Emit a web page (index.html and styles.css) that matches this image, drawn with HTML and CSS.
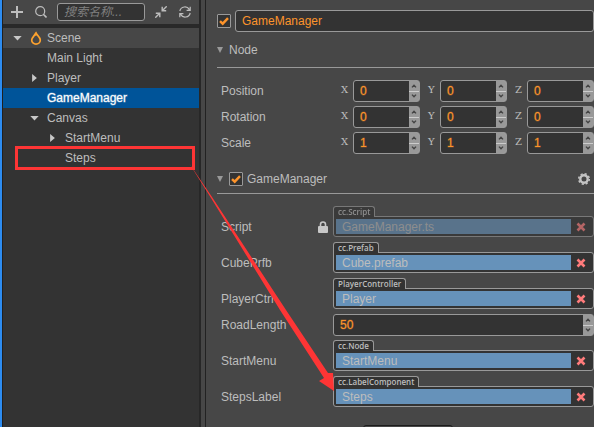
FILE: index.html
```html
<!DOCTYPE html>
<html lang="en">
<head>
<meta charset="utf-8">
<title>Scene editor</title>
<link rel="stylesheet" href="styles.css">
</head>
<body>
<svg class="symbols" aria-hidden="true">
  <symbol id="tick" viewBox="0 0 12 12"><path d="M2 6.2 4.7 8.7 10 3.2" fill="none" stroke="#fd942b" stroke-width="2.4"/></symbol>
  <symbol id="cross" viewBox="0 0 10 10"><path d="M1.5 1.5l7 7M8.5 1.5l-7 7" fill="none" stroke="#ff7b7b" stroke-width="2.6"/></symbol>
  <symbol id="up" viewBox="0 0 6 4"><path d="M1 3.4 3 1.2 5 3.4" fill="none" stroke="#444" stroke-width="1.4"/></symbol>
  <symbol id="down" viewBox="0 0 6 4"><path d="M1 .6 3 2.8 5 .6" fill="none" stroke="#444" stroke-width="1.4"/></symbol>
  <symbol id="open" viewBox="0 0 10 6"><path d="M0 0h10L5 5.5z" fill="#c8c8c8"/></symbol>
  <symbol id="closed" viewBox="0 0 6 10"><path d="M0 0v10L6 5z" fill="#c8c8c8"/></symbol>
</svg>
<main class="app">
  <aside class="hierarchy">
    <div class="toolbar">
      <button class="tool" aria-label="Add node"><svg width="12" height="12" viewBox="0 0 12 12"><path d="M6 0v12M0 6h12" stroke="#bdbdbd" stroke-width="2"/></svg></button>
      <button class="tool" aria-label="Search"><svg width="12" height="12" viewBox="0 0 12 12" fill="none" stroke="#bdbdbd"><circle cx="5.2" cy="5.2" r="4.5" stroke-width="1.2"/><path d="M8.3 8.3 11.5 11.5" stroke-width="1.6"/></svg></button>
      <input class="search" type="text" placeholder="搜索名称..." aria-label="搜索名称">
      <button class="tool" aria-label="Collapse all"><svg width="12" height="12" viewBox="0 0 12 12" fill="none" stroke="#bdbdbd" stroke-width="1.4"><path d="M11.7.3 7.5 4.5M7.2.8v4h4M.3 11.7l4.2-4.2M.8 7.2h4v4"/></svg></button>
      <button class="tool" aria-label="Refresh"><svg width="12" height="12" viewBox="0 0 12 12" fill="none" stroke="#bdbdbd" stroke-width="1.2"><path d="M.8 5A5.2 5.2 0 0 1 10.4 3.6M11.2 7A5.2 5.2 0 0 1 1.6 8.4M11.2.7v3.6H7.6M.8 11.3V7.7h3.6"/></svg></button>
    </div>
    <ul class="tree">
      <li class="node root">
        <span class="arrow"><svg width="9" height="5"><use href="#open"/></svg></span>
        <svg class="flame" width="12" height="14" viewBox="0 0 12 14"><path d="M6 1.6C6.2 4 10.3 5.6 10.3 9A4.2 4 0 0 1 1.7 9C1.7 6.500 4.700 5 6 1.600z" fill="none" stroke="#fca22f" stroke-width="1.700"/><path d="M6 0 7.600 4 5 5z" fill="#fca22f"/></svg>
        <span>Scene</span>
      </li>
      <li class="node level-one"><span class="arrow"></span><span>Main Light</span></li>
      <li class="node level-one"><span class="arrow"><svg width="5" height="8"><use href="#closed"/></svg></span><span>Player</span></li>
      <li class="node level-one selected"><span class="arrow"></span><span>GameManager</span></li>
      <li class="node level-one"><span class="arrow"><svg width="9" height="5"><use href="#open"/></svg></span><span>Canvas</span></li>
      <li class="node level-two"><span class="arrow"><svg width="5" height="8"><use href="#closed"/></svg></span><span>StartMenu</span></li>
      <li class="node level-two"><span class="arrow"></span><span>Steps</span></li>
    </ul>
  </aside>

  <section class="inspector">
    <div class="name-row">
      <label class="check"><input type="checkbox" checked aria-label="Node enabled"><svg width="12" height="12"><use href="#tick"/></svg></label>
      <input class="name" type="text" value="GameManager" aria-label="Node name">
    </div>

    <h2 class="heading"><svg class="fold" width="6" height="6" viewBox="0 0 6 6"><path d="M0 0h6L3 6z" fill="#999"/></svg><span>Node</span></h2>
    <div class="rows vectors" id="vectors"></div>

    <h2 class="heading component">
      <svg class="fold" width="6" height="6" viewBox="0 0 6 6"><path d="M0 0h6L3 6z" fill="#999"/></svg>
      <label class="check"><input type="checkbox" checked aria-label="Component enabled"><svg width="12" height="12"><use href="#tick"/></svg></label>
      <span>GameManager</span>
      <button class="tool gear" aria-label="Component settings"><svg width="12" height="12" viewBox="0 0 12 12" fill="none" stroke="#c4c4c4"><circle cx="6" cy="6" r="3.700" stroke-width="2.400"/><circle cx="6" cy="6" r="5.300" stroke-width="1.500" stroke-dasharray="2.160 2"/></svg></button>
    </h2>
    <div class="rows" id="properties"></div>
    <button class="add" aria-label="Add component"></button>
  </section>

  <svg class="callout" width="345" height="400" viewBox="0 0 345 400" aria-hidden="true">
    <rect x="16.500" y="147.500" width="177" height="21" fill="none" stroke="#fd3535" stroke-width="3"/>
    <path d="M189 163 212 197 286 310 328 373 333 373 334 391 319 381 324 378 280 310 211 198z" fill="#fd3535"/>
  </svg>
</main>
<script src="app.js"></script>
</body>
</html>
```
FILE: styles.css
```css
* { box-sizing: border-box; }

body {
  margin: 0;
  background: #474747;
  color: #bdbdbd;
  font: 12px/20px "Liberation Sans", "Noto Sans CJK SC", sans-serif;
}

button, input { font: inherit; color: inherit; }
input { min-width: 0; border-radius: 3px; outline: 0; }
svg { display: block; flex: none; }
.symbols { position: absolute; width: 0; height: 0; }

.app {
  position: relative;
  display: flex;
  height: 100vh;
  overflow: hidden;
}

.hierarchy {
  display: flex;
  flex-direction: column;
  flex: none;
  width: 201px;
  border-left: 2px solid #2d8cf0;
  border-right: 2px solid #272727;
}

.toolbar {
  display: flex;
  align-items: center;
  gap: 12px;
  height: 24px;
  padding: 0 8px;
  border-left: 1px solid #202020;
}

.tool {
  display: block;
  flex: none;
  width: 12px;
  height: 12px;
  padding: 0;
  border: 0;
  background: none;
}

.search {
  flex: 1;
  width: 0;
  height: 18px;
  margin: 0 -2px 0 -2px;
  padding: 0 6px;
  border: 1px solid #999;
  background: #333;
  font-style: italic;
}
.search::placeholder { color: #808080; }

.tree {
  flex: 1;
  margin: 0;
  padding: 4px 0 0;
  border-left: 1px solid #202020;
  background: linear-gradient(#292929 4px, #333 4px);
  list-style: none;
}
.node { display: flex; align-items: center; height: 20px; }
.node .arrow { display: grid; place-items: center; width: 10px; margin-right: 8px; }
.root { padding-left: 9px; background: #474747; }
.flame { margin-right: 5px; }
.level-one { padding-left: 26px; }
.level-two { padding-left: 44px; }
.selected { background: #005499; color: #fff; -webkit-text-stroke: 1px #ffffff60; }

.inspector {
  flex: 1;
  min-width: 0;
  margin-left: 4px;
  padding: 10px 0 0 11px;
  border-left: 1px solid #222;
}

.name-row { display: flex; align-items: center; gap: 4px; }
.name {
  flex: 1;
  height: 22px;
  padding: 0 6px;
  border: 1px solid #999;
  background: #333;
  color: #fd942b;
}

.check {
  display: grid;
  flex: none;
  width: 14px;
  height: 14px;
  border: 1px solid #999;
  border-radius: 1px;
  background: #333;
}
.check input { grid-area: 1 / 1; width: 12px; height: 12px; margin: 0; appearance: none; }
.check svg { grid-area: 1 / 1; pointer-events: none; }

.heading {
  display: flex;
  align-items: center;
  height: 36px;
  margin: 0;
  border-bottom: 1px solid #999;
  font-size: 12px;
  font-weight: normal;
}
.fold { margin-right: 6px; }
.component { height: 29px; margin-top: 11px; }
.component .check { margin-right: 4px; }
.gear { margin: 0 4px 0 auto; }

.rows { display: grid; gap: 4px; padding: 12px 0 0 4px; }
.row { display: flex; align-items: flex-end; line-height: 22px; }
.caption { flex: none; width: 112px; }
.lock { width: 10px; margin: 0 5px 5px -15px; }

.axes { display: grid; grid-template-columns: repeat(3, 1fr); flex: 1; min-width: 0; }
.axis { display: flex; }
.axis label {
  flex: none;
  width: 20px;
  padding-left: 8px;
  font: 10px/20px "DejaVu Serif", serif;
}

.number {
  display: flex;
  flex: 1;
  min-width: 0;
  height: 22px;
  overflow: hidden;
  border: 1px solid #999;
  border-radius: 3px;
  background: #333;
}
.number input {
  flex: 1;
  width: 0;
  padding: 0 6px;
  border: 0;
  background: none;
  color: #fd942b;
  -webkit-text-stroke: 1px #fd942b50;
}
.spin { display: grid; grid-template-rows: 1fr 1fr; gap: 1px; width: 10px; background: #ccc; }
.spin button { display: grid; place-items: center; padding: 0; border: 0; background: #999; }

.reference { display: flex; flex-direction: column; align-items: flex-start; flex: 1; min-width: 0; padding-bottom: 1px; }
.type {
  z-index: 1;
  height: 11px;
  margin-bottom: -1px;
  padding: 0 4px;
  border: 1px solid #999;
  border-bottom: 0;
  border-radius: 3px 3px 0 0;
  background: #333;
  font: 8px/10px "Open Sans", sans-serif;
  font-weight: 600;
}
.asset {
  display: flex;
  align-items: center;
  width: 100%;
  height: 21px;
  padding-left: 2px;
  border: 1px solid #999;
  border-radius: 0 3px 3px 3px;
  background: #333;
}
.asset input {
  flex: 1;
  height: 15px;
  padding: 0 6px;
  border: 0;
  border-radius: 0;
  background: #6692ba;
}
.clear { display: grid; place-items: center; width: 22px; padding: 0 2px 0 0; border: 0; background: none; }
.locked { opacity: .6; }

.add {
  display: block;
  width: 90px;
  height: 24px;
  margin: 17px auto 0 146px;
  border: 1px solid #1c1c1c;
  border-radius: 3px;
  background: #474747;
}

.callout { position: absolute; top: 0; left: 0; z-index: 2; pointer-events: none; }
```
FILE: app.js
```js
const icon = (name, width, height) =>
  `<svg width="${width}" height="${height}"><use href="#${name}"/></svg>`;

const number = (id, value) => `
  <div class="number">
    <input type="text" inputmode="numeric" id="${id}" value="${value}">
    <div class="spin">
      <button aria-label="Increase">${icon("up", 6, 4)}</button>
      <button aria-label="Decrease">${icon("down", 6, 4)}</button>
    </div>
  </div>`;

document.getElementById("vectors").innerHTML = [["Position", 0], ["Rotation", 0], ["Scale", 1]]
  .map(([name, value]) => `
    <div class="row"><span class="caption">${name}</span><div class="axes">
      ${["X", "Y", "Z"].map(axis => `
        <div class="axis"><label for="${name}-${axis}">${axis}</label>${number(name + "-" + axis, value)}</div>`).join("")}
    </div></div>`).join("");

const properties = [
  { name: "Script", type: "cc.Script", value: "GameManager.ts", locked: true },
  { name: "CubePrfb", type: "cc.Prefab", value: "Cube.prefab" },
  { name: "PlayerCtrl", type: "PlayerController", value: "Player" },
  { name: "RoadLength", value: 50 },
  { name: "StartMenu", type: "cc.Node", value: "StartMenu" },
  { name: "StepsLabel", type: "cc.LabelComponent", value: "Steps" },
];

const lock = `<svg class="lock" width="10" height="12" viewBox="0 0 10 12"><path d="M2.500 6V3.500a2.500 2.500 0 0 1 5 0V6" fill="none" stroke="#c8c8c8" stroke-width="1.600"/><rect y="5" width="10" height="7" rx="1" fill="#c8c8c8"/></svg>`;

const reference = p => `
  <div class="reference${p.locked ? " locked" : ""}">
    <span class="type">${p.type}</span>
    <div class="asset">
      <input id="${p.name}" value="${p.value}" readonly>
      <button class="clear" aria-label="Clear ${p.name}">${icon("cross", 10, 10)}</button>
    </div>
  </div>`;

document.getElementById("properties").innerHTML = properties.map(p => `
  <div class="row"><label class="caption" for="${p.name}">${p.name}</label>${p.locked ? lock : ""}
    ${p.type ? reference(p) : number(p.name, p.value)}
  </div>`).join("");
```
